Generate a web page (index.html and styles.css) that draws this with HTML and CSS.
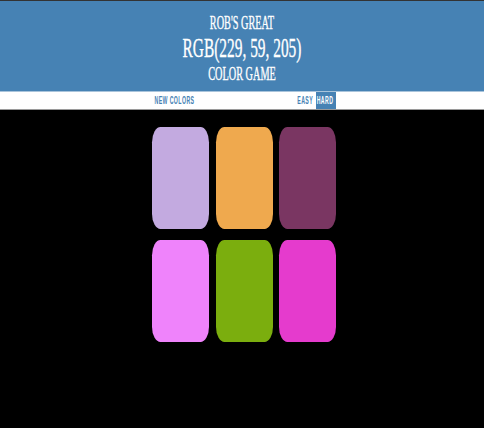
FILE: index.html
```html
<!DOCTYPE html>
<html lang="en">
<head>
<meta charset="utf-8">
<title>Color Game</title>
<link rel="stylesheet" href="styles.css">
</head>
<body>
<h1 class="title">
  <span class="line small">ROB'S GREAT</span>
  <span class="line big">RGB(229, 59, 205)</span>
  <span class="line small">COLOR GAME</span>
</h1>
<div class="stripe">
  <button class="btn new"><span class="lbl">NEW COLORS</span></button>
  <span class="message"></span>
  <button class="btn easy"><span class="lbl">EASY</span></button>
  <button class="btn hard selected"><span class="lbl">HARD</span></button>
</div>
<div class="container">
  <div class="square c1"></div>
  <div class="square c2"></div>
  <div class="square c3"></div>
  <div class="square c4"></div>
  <div class="square c5"></div>
  <div class="square c6"></div>
</div>
</body>
</html>
```
FILE: styles.css
```css
html, body {
  margin: 0;
  padding: 0;
  background: #000;
}
body {
  font-family: "Liberation Serif", "Times New Roman", serif;
}
.title {
  margin: 0;
  background: #4682b4;
  border-top: 1px solid #333;
  border-bottom: 1px solid #a9c4db;
  color: #fff;
  font-weight: normal;
  text-align: center;
  padding: 12px 0 7px;
}
.line {
  display: block;
  transform: scaleX(0.57);
  -webkit-text-stroke: 0.35px #fff;
}
.small {
  font-size: 18px;
  line-height: 20px;
}
.big {
  font-size: 27px;
  line-height: 31px;
}
.stripe {
  background: #fff;
  height: 17px;
  border-bottom: 1px solid #9a9a9a;
  display: flex;
  justify-content: center;
  align-items: stretch;
  padding-left: 2px;
}
.btn {
  border: none;
  background: none;
  margin: 0;
  padding: 0;
  height: 17px;
  display: flex;
  align-items: center;
  justify-content: center;
  color: #4682b4;
  font-family: "Liberation Sans", Arial, sans-serif;
  font-weight: 700;
  font-size: 10px;
}
.lbl {
  display: inline-block;
  transform: scaleX(0.52);
  letter-spacing: 0.8px;
  white-space: nowrap;
}
.new { width: 48px; }
.message { width: 96px; }
.easy { width: 21px; }
.hard { width: 20px; }
.selected {
  background: #4682b4;
  color: #fff;
}
.container {
  display: grid;
  grid-template-columns: repeat(3, 57px);
  grid-auto-rows: 102px;
  column-gap: 6.5px;
  row-gap: 11px;
  justify-content: center;
  margin-top: 17px;
  padding-left: 4px;
}
.square {
  border-radius: 15%;
}
.c1 { background: #c3aae0; }
.c2 { background: #efa94e; }
.c3 { background: #7a3662; }
.c4 { background: #ef83fb; }
.c5 { background: #7bae0e; }
.c6 { background: #e53bcd; }
```
